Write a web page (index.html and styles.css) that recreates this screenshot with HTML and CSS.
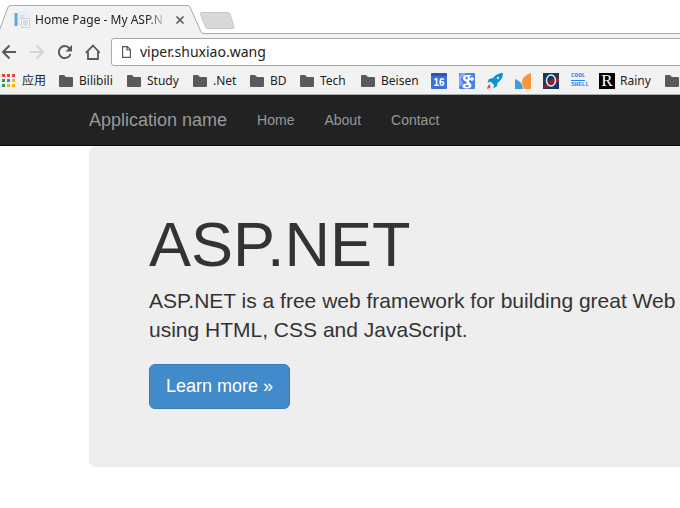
FILE: index.html
```html
<!DOCTYPE html>
<html lang="en">
<head>
<meta charset="utf-8">
<title>Home Page - My ASP.NET Application</title>
<link rel="stylesheet" href="styles.css">
</head>
<body>
<div class="browser">
  <div class="tab-strip">
    <div class="tab">
      <svg class="tab-shape" width="204" height="29" viewBox="0 0 204 29" aria-hidden="true">
        <path d="M-2 29L8 2Q9 .5 11 .5H187Q189 .5 190 2L201 27Q202 28.500 204 28.500V29Z" fill="#f2f2f2"/>
        <path d="M-2 29L8 2Q9 .5 11 .5H187Q189 .5 190 2L201 27Q202 28.500 204 28.500" fill="none" stroke="#a9a9a9"/>
      </svg>
      <svg class="favicon" width="16" height="16" viewBox="0 0 16 16" aria-hidden="true">
        <path d="M0 1h4v13H0z" fill="#a5cde8"/><path d="M1 1h2v13H1z" fill="#60a8d6"/>
        <path d="M5 .5h8v12H5z" fill="#fafcfd" stroke="#dbe2e8"/>
        <path d="M6 3h5M6 5h5M6 7h3" stroke="#b5cddd"/>
        <path d="M7.500 6.500h8v9h-8z" fill="#f6f8fa" stroke="#c8d1d9"/>
        <path d="M9 9h5M9 11h5M9 13h5" stroke="#b4c3ce"/>
      </svg>
      <span class="tab-title">Home Page - My ASP.N</span>
      <button class="tab-close" aria-label="Close tab"><svg width="10" height="10" viewBox="0 0 10 10"><path d="M1.500 1.500l7 7M8.500 1.500l-7 7" stroke="#5a5a5a" stroke-width="1.700"/></svg></button>
    </div>
    <button class="new-tab" aria-label="New tab"><svg width="36" height="19" viewBox="0 0 36 19"><path d="M2.500 1.500h26q2 0 2.500 1.500l4 12.500q.5 2-1.500 2H9q-2 0-2.500-1.500L1.500 3.500Q1 1.500 2.500 1.500z" fill="#d8d8d8" stroke="#c6c6c6"/></svg></button>
  </div>
  <div class="toolbar">
    <button class="tool" aria-label="Back"><svg width="16" height="16" viewBox="0 0 16 16"><path d="M16 8H3M9.500 1.500L3 8l6.500 6.500" fill="none" stroke="#5a5a5a" stroke-width="2"/></svg></button>
    <button class="tool" aria-label="Forward" disabled><svg width="16" height="16" viewBox="0 0 16 16"><path d="M2 8h13M8.500 1.500L15 8l-6.500 6.500" fill="none" stroke="#d3d3d3" stroke-width="2"/></svg></button>
    <button class="tool" aria-label="Reload"><svg width="16" height="16" viewBox="0 0 16 16"><path d="M13.500 4.300A6 6 0 1 0 14.500 10" fill="none" stroke="#5a5a5a" stroke-width="2"/><path d="M16 1v6.500H9.500z" fill="#5a5a5a"/></svg></button>
    <button class="tool" aria-label="Home page"><svg width="16" height="16" viewBox="0 0 16 16"><path d="M1.800 8.800L9 1.500l6.800 7.300M4 7.500V15h10V7.500" fill="none" stroke="#5a5a5a" stroke-width="1.800"/></svg></button>
    <div class="address">
      <svg width="9" height="12" viewBox="0 0 9 12" aria-hidden="true"><path d="M.6.6h4.800l3 3v7.800H.6zM5 .6V4h3.400" fill="none" stroke="#5a5a5a" stroke-width="1.200"/></svg>
      <input type="text" value="viper.shuxiao.wang" aria-label="Address">
    </div>
  </div>
  <nav class="bookmarks" aria-label="Bookmarks">
    <a href="#" class="apps"><svg width="14" height="14" viewBox="0 0 14 14" aria-hidden="true">
      <path d="M0 0h3v3H0zM5 0h3v3H5zM10 0h3v3h-3z" fill="#ee4035"/><path d="M0 5h3v3H0zM0 10h3v3H0z" fill="#2f9e55"/><path d="M5 5h3v3H5z" fill="#2f83f0"/><path d="M10 5h3v3h-3zM5 10h3v3H5zM10 10h3v3h-3z" fill="#fbb400"/></svg>应用</a>
    <a href="#"><svg class="folder" viewBox="0 0 14 12"><path d="M0 1q0-1 1-1h4l2 2h6q1 0 1 1v8q0 1-1 1H1q-1 0-1-1z"/></svg>Bilibili</a>
    <a href="#"><svg class="folder" viewBox="0 0 14 12"><path d="M0 1q0-1 1-1h4l2 2h6q1 0 1 1v8q0 1-1 1H1q-1 0-1-1z"/></svg>Study</a>
    <a href="#"><svg class="folder" viewBox="0 0 14 12"><path d="M0 1q0-1 1-1h4l2 2h6q1 0 1 1v8q0 1-1 1H1q-1 0-1-1z"/></svg>.Net</a>
    <a href="#"><svg class="folder" viewBox="0 0 14 12"><path d="M0 1q0-1 1-1h4l2 2h6q1 0 1 1v8q0 1-1 1H1q-1 0-1-1z"/></svg>BD</a>
    <a href="#"><svg class="folder" viewBox="0 0 14 12"><path d="M0 1q0-1 1-1h4l2 2h6q1 0 1 1v8q0 1-1 1H1q-1 0-1-1z"/></svg>Tech</a>
    <a href="#"><svg class="folder" viewBox="0 0 14 12"><path d="M0 1q0-1 1-1h4l2 2h6q1 0 1 1v8q0 1-1 1H1q-1 0-1-1z"/></svg>Beisen</a>
    <a href="#" class="calendar" aria-label="Calendar"><span>16</span></a>
    <a href="#" aria-label="Google"><svg width="16" height="16" viewBox="0 0 16 16"><rect width="16" height="16" rx="1" fill="#4a80ec"/><path d="M0 3l3-3h4L2 6l2 5-4 3z" fill="#86aaf3"/><path d="M12 2H7.500Q4 2 4 5t3.500 3.500q-.5 1 .5 2-4.500 0-4.500 2.500T8 15.500q4.500 0 4.500-3 0-2-2-3-1.500-1 0-2Q12 6 10.500 3H12z" fill="#fff"/><ellipse cx="7.500" cy="5" rx="1.200" ry="1.600" fill="#4a80ec"/><ellipse cx="8" cy="13" rx="1.800" ry="1" fill="#4a80ec"/><path d="M11 6h4M13 4v4" stroke="#fff" stroke-width="1.500"/></svg></a>
    <a href="#" aria-label="Rocket"><svg width="16" height="16" viewBox="0 0 16 16"><path d="M16 0Q10 0 6 5L2 6 .5 9.500 4 9l3 3-.5 3.500L10 13l.5-3Q16 6 16 0z" fill="#0c91d6"/><circle cx="11" cy="5" r="1.200" fill="#c5e6f5"/><path d="M3 11Q.5 12 0 16q3-.5 4.500-3l-1.500.5z" fill="#df5146"/></svg></a>
    <a href="#" aria-label="Analytics"><svg width="16" height="16" viewBox="0 0 16 16"><path d="M0 6q7 2 8 10H0z" fill="#4299db"/><path d="M16 0v16H9Q5 8 9 4q3-3 7-4z" fill="#f8973a"/></svg></a>
    <a href="#" aria-label="O"><svg width="16" height="16" viewBox="0 0 16 16"><path d="M0 0h16v16H0z" fill="#173a60"/><path d="M0 14q4-3 7-6t9-3v4q-5 0-8 3t-8 3z" fill="#a51c2b"/><ellipse cx="8" cy="7.500" rx="4.500" ry="5.500" fill="none" stroke="#e9edf2" stroke-width="1.500"/></svg></a>
    <a href="#" class="cool" aria-label="Cool Shell"><span>COOL</span><span>SHELL</span></a>
    <a href="#" class="rainy"><span class="letter" aria-hidden="true">R</span>Rainy</a>
    <a href="#" aria-label="Folder"><svg class="folder" viewBox="0 0 14 12"><path d="M0 1q0-1 1-1h4l2 2h6q1 0 1 1v8q0 1-1 1H1q-1 0-1-1z"/></svg></a>
  </nav>
</div>
<header class="navbar">
  <a class="brand" href="#">Application name</a>
  <nav class="links"><a href="#">Home</a><a href="#">About</a><a href="#">Contact</a></nav>
</header>
<main class="container">
  <section class="jumbotron">
    <h1>ASP.NET</h1>
    <p>ASP.NET is a free web framework for building great Web using HTML, CSS and JavaScript.</p>
    <a class="button" href="#">Learn more »</a>
  </section>
</main>
</body>
</html>
```
FILE: styles.css
```css
* { box-sizing: border-box; }

body {
  margin: 0;
  background: #fff;
  color: #333;
  font-family: "Liberation Sans", Arial, sans-serif;
  overflow-x: hidden;
}

a { text-decoration: none; color: inherit; }
svg { display: block; flex: none; }
button { border: 0; padding: 0; background: none; }

.browser {
  background: #f2f2f2;
  border-bottom: 1px solid #a9a9a9;
  color: #222;
  font: 12px/16px "Noto Sans", "Noto Sans CJK SC", sans-serif;
}

/* Tabs */
.tab-strip {
  display: flex;
  height: 34px;
  padding-top: 5px;
  background: linear-gradient(#a9a9a9, #a9a9a9) bottom / 100% 1px no-repeat #fff;
}
.tab {
  position: relative;
  display: flex;
  align-items: center;
  width: 199px;
  padding: 0 14px;
}
.tab-shape { position: absolute; left: 0; top: 0; }
.favicon { position: relative; margin-right: 5px; }
.tab-title {
  position: relative;
  width: 133px;
  white-space: nowrap;
  -webkit-mask-image: linear-gradient(to right, #000 112px, transparent 133px);
  mask-image: linear-gradient(to right, #000 112px, transparent 133px);
}
.tab-close { position: relative; margin-left: 7px; }
.new-tab { position: relative; align-self: flex-start; padding-top: 6px; }

/* Toolbar */
.toolbar { display: flex; align-items: center; gap: 12px; padding-top: 4px; }
.address {
  display: flex;
  flex: 1;
  align-items: center;
  gap: 9px;
  height: 28px;
  margin: 0 -4px 0 -1px;
  padding-left: 10px;
  border: 1px solid #a9a9a9;
  border-radius: 3px;
  background: #fff;
}
.address input {
  flex: 1;
  min-width: 0;
  padding: 0;
  border: 0;
  outline: 0;
  background: none;
  color: #222;
  font: 14px/20px "Noto Sans", sans-serif;
}

/* Bookmarks */
.bookmarks {
  display: grid;
  grid-template-columns: 57px 68px 66px 57px 50px 61px 70px repeat(6, 28px) 66px 60px;
  align-items: center;
  height: 28px;
  padding: 1px 0 0 2px;
  overflow: hidden;
}
.bookmarks a { display: flex; align-items: center; gap: 6px; white-space: nowrap; }
.folder { width: 14px; height: 12px; fill: #5a5a5a; }
.calendar span {
  width: 16px;
  height: 16px;
  border-top: 3px solid #2b56b5;
  border-radius: 1px;
  background: #3f70d6;
  color: #fff;
  font: bold 10px/13px "Liberation Sans", sans-serif;
  text-align: center;
}
.bookmarks .cool {
  flex-direction: column;
  align-items: flex-start;
  gap: 0;
  color: #1689f5;
  font: bold 6px/8px "Liberation Mono", monospace;
}
.cool span:first-child { border-bottom: 1px solid #1689f5; }
.letter {
  width: 16px;
  height: 16px;
  background: #000;
  color: #fff;
  font: 17px/16px "Liberation Serif", serif;
  text-align: center;
}
.bookmarks .rainy { gap: 5px; }

/* Page */
.navbar {
  display: flex;
  align-items: center;
  height: 51px;
  padding-left: 89px;
  border-bottom: 1px solid #080808;
  background: #222;
  color: #999;
}
.brand { font-size: 18px; line-height: 20px; }
.links { display: flex; gap: 30px; margin-left: 30px; font-size: 14px; line-height: 20px; }

.container { padding-left: 89px; }
.jumbotron {
  padding: 67px 0 58px 60px;
  border-radius: 6px 0 0 6px;
  background: #eee;
}
.jumbotron h1 { margin: 0 0 10px; font-size: 63px; font-weight: 400; line-height: 63px; }
.jumbotron p { margin: 0 0 20px; font-size: 21px; line-height: 29px; }
.button {
  display: inline-block;
  padding: 10px 16px;
  border: 1px solid #357ebd;
  border-radius: 6px;
  background: #428bca;
  color: #fff;
  font-size: 18px;
  line-height: 23px;
  vertical-align: top;
}
```
